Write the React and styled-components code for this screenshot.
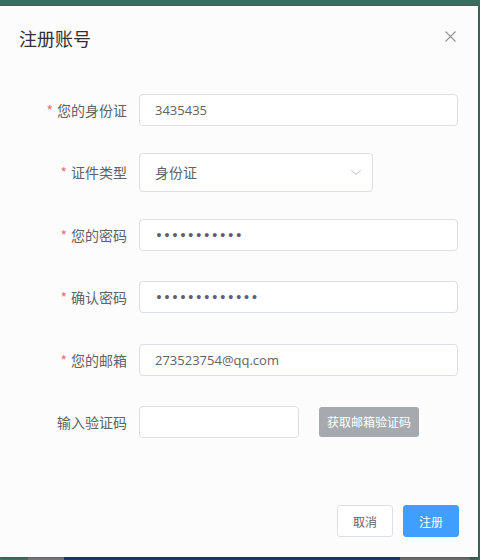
import React from "react";
import styled, { createGlobalStyle } from "styled-components";

const Global = createGlobalStyle`
  html, body { margin: 0; padding: 0; }
  body {
    width: 480px;
    height: 560px;
    overflow: hidden;
    background:
      linear-gradient(to right, #4a7466 0 28px, #7d7f80 28px 64px, #1f4068 64px 400px, #6f7473 400px 470px, #3f6a5c 470px) bottom / 100% 3px no-repeat,
      #3e6b5f;
    font-family: "Open Sans", "Noto Sans CJK SC", sans-serif;
  }
`;

const Page = styled.div`
  display: flex;
  padding-top: 6px;
`;

const Dialog = styled.div`
  width: 478px;
  height: 551px;
  background: #fcfcfc;
  box-shadow: 0 1px 3px rgba(0, 0, 0, 0.3);
  display: flex;
  flex-direction: column;
  box-sizing: border-box;
`;

const Header = styled.div`
  display: flex;
  align-items: center;
  justify-content: space-between;
  padding: 20px 20px 10px 19px;
`;

const Title = styled.span`
  font-family: "Noto Sans CJK SC", sans-serif;
  font-size: 18px;
  line-height: 24px;
  color: #303133;
`;

const Close = styled.button`
  border: 0;
  background: none;
  padding: 0;
  width: 16px;
  height: 16px;
  display: flex;
  align-items: center;
  justify-content: center;
  margin-right: 0;
  margin-top: -4px;
  cursor: pointer;
`;

const Form = styled.div`
  display: flex;
  flex-direction: column;
  gap: 22.4px;
  padding: 30px 20px 0 20px;
`;

const Item = styled.div`
  display: flex;
  align-items: center;
  height: 40px;
`;

const Label = styled.label`
  width: 107px;
  padding-right: 12px;
  text-align: right;
  font-family: "Noto Sans CJK SC", sans-serif;
  font-size: 14px;
  color: #606266;
  flex-shrink: 0;
  white-space: nowrap;
`;

const Star = styled.span`
  color: #f56c6c;
  margin-right: 4px;
  font-size: 14px;
`;

const Input = styled.input`
  box-sizing: border-box;
  width: ${(p) => (p.$w ? `${p.$w}px` : "auto")};
  flex: ${(p) => (p.$w ? "none" : "1")};
  min-width: 0;
  height: 32px;
  border: 1px solid #dcdfe6;
  border-radius: 4px;
  background: #fff;
  padding: 0 15px;
  font-family: ${(p) =>
    p.type === "password"
      ? `"DejaVu Sans", sans-serif`
      : `"Open Sans", "Noto Sans CJK SC", sans-serif`};
  font-size: ${(p) => (p.type === "password" ? "13.5px" : "13px")};
  color: #606266;
  outline: none;
  letter-spacing: 0;
`;

const Select = styled.div`
  box-sizing: border-box;
  width: 234px;
  height: 39px;
  border: 1px solid #dcdfe6;
  border-radius: 4px;
  background: #fff;
  padding: 0 9px 0 15px;
  display: flex;
  align-items: center;
  justify-content: space-between;
  font-family: "Noto Sans CJK SC", sans-serif;
  font-size: 14px;
  color: #606266;
`;

const CodeButton = styled.button`
  margin-left: 20px;
  width: 100px;
  height: 30px;
  border: 0;
  border-radius: 3px;
  background: #a6a9ad;
  color: #fff;
  font-family: "Noto Sans CJK SC", sans-serif;
  font-size: 12px;
  padding: 0;
`;

const Footer = styled.div`
  margin-top: auto;
  display: flex;
  justify-content: flex-end;
  gap: 10px;
  padding: 10px 19px 20px 20px;
`;

const Button = styled.button`
  box-sizing: border-box;
  height: 32px;
  padding: 0 15px;
  border-radius: 3px;
  font-family: "Noto Sans CJK SC", sans-serif;
  font-size: 12px;
  border: 1px solid ${(p) => (p.$primary ? "#409eff" : "#dcdfe6")};
  background: ${(p) => (p.$primary ? "#409eff" : "#fff")};
  color: ${(p) => (p.$primary ? "#fff" : "#606266")};
`;

const Chevron = () => (
  <svg width="14" height="14" viewBox="0 0 14 14" fill="none">
    <path d="M2 5l5 4.5L12 5" stroke="#c0c4cc" strokeWidth="1" />
  </svg>
);

const XIcon = () => (
  <svg width="11" height="11" viewBox="0 0 11 11" fill="none">
    <path d="M0.5 0.5l10 10M10.5 0.5l-10 10" stroke="#909399" strokeWidth="1.1" />
  </svg>
);

export default function App() {
  return (
    <>
      <Global />
      <Page>
        <Dialog>
          <Header>
            <Title>注册账号</Title>
            <Close aria-label="close">
              <XIcon />
            </Close>
          </Header>
          <Form>
            <Item>
              <Label><Star>*</Star>您的身份证</Label>
              <Input readOnly value="3435435" />
            </Item>
            <Item>
              <Label><Star>*</Star>证件类型</Label>
              <Select>
                <span>身份证</span>
                <Chevron />
              </Select>
            </Item>
            <Item>
              <Label><Star>*</Star>您的密码</Label>
              <Input readOnly type="password" value="12345678901" />
            </Item>
            <Item>
              <Label><Star>*</Star>确认密码</Label>
              <Input readOnly type="password" value="1234567890123" />
            </Item>
            <Item>
              <Label><Star>*</Star>您的邮箱</Label>
              <Input readOnly value="273523754@qq.com" />
            </Item>
            <Item>
              <Label>输入验证码</Label>
              <Input readOnly $w={160} value="" />
              <CodeButton>获取邮箱验证码</CodeButton>
            </Item>
          </Form>
          <Footer>
            <Button>取消</Button>
            <Button $primary>注册</Button>
          </Footer>
        </Dialog>
      </Page>
    </>
  );
}
